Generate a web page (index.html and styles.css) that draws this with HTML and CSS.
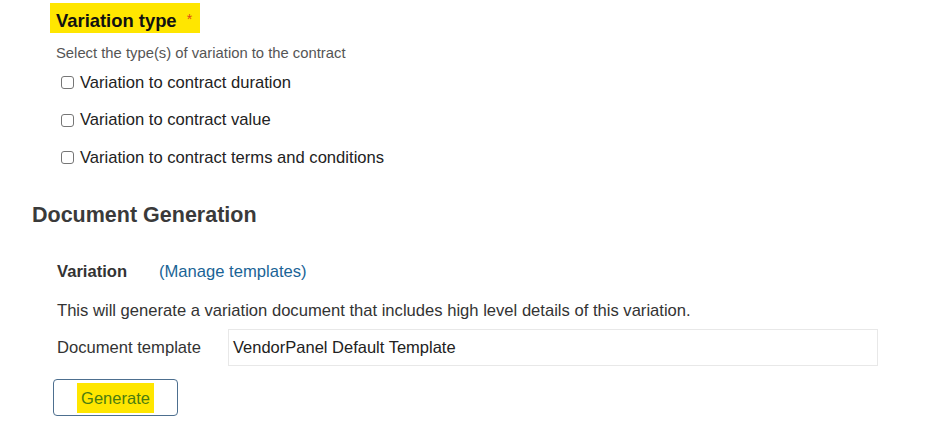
FILE: index.html
```html
<!DOCTYPE html>
<html>
<head>
<meta charset="utf-8">
<link rel="stylesheet" href="styles.css">
</head>
<body>
<div class="page">
  <section class="variation">
    <div class="vt-title"><span class="hl">Variation type <span class="req">*</span></span></div>
    <div class="hint">Select the type(s) of variation to the contract</div>
    <div class="checks">
      <label class="check"><span class="box"></span>Variation to contract duration</label>
      <label class="check"><span class="box"></span>Variation to contract value</label>
      <label class="check"><span class="box"></span>Variation to contract terms and conditions</label>
    </div>
  </section>
  <h2 class="dg-title">Document Generation</h2>
  <section class="docgen">
    <div class="vrow"><span class="vlabel">Variation</span><a class="manage">(Manage templates)</a></div>
    <p class="desc">This will generate a variation document that includes high level details of this variation.</p>
    <div class="trow"><span class="tlabel">Document template</span><div class="tinput">VendorPanel Default Template</div></div>
    <button class="gen"><span class="gen-hl">Generate</span></button>
  </section>
</div>
</body>
</html>
```
FILE: styles.css
```css
* { box-sizing: border-box; }
body { margin: 0; background: #fff; font-family: "Liberation Sans", Arial, sans-serif; color: #333; }
.page { padding: 3px 0 0 0; }
.variation { padding-left: 50px; }
.vt-title { display: flex; }
.hl { background: #ffe600; color: #111; font-weight: bold; font-size: 18.4px; height: 30px; line-height: 32px; padding: 0 6px 0 6px; width: 150px; }
.req { color: #e0461a; font-size: 14px; font-weight: normal; vertical-align: 3px; margin-left: 5px; }
.hint { font-size: 14.8px; color: #555; margin: 11px 0 0 6px; line-height: 18px; }
.checks { display: flex; flex-direction: column; gap: 18.5px; margin: 11px 0 0 11px; }
.check { display: flex; align-items: center; font-size: 16.6px; color: #222; height: 19px; }
.box { width: 13px; height: 13px; border: 1px solid #767676; border-radius: 3px; margin-right: 6px; background: #fff; }
.dg-title { font-size: 21.5px; font-weight: bold; color: #3a3a3a; margin: 35px 0 0 32px; line-height: 26px; }
.docgen { padding-left: 57px; }
.vrow { display: flex; font-size: 16.6px; margin-top: 34px; line-height: 20px; }
.vlabel { font-weight: bold; color: #333; width: 102px; }
.manage { color: #1a6496; }
.desc { margin: 19px 0 0 0; font-size: 16.6px; color: #333; line-height: 20px; }
.trow { display: flex; align-items: center; margin-top: 8px; }
.tlabel { width: 171px; font-size: 16.6px; color: #333; }
.tinput { width: 650px; height: 37px; border: 1px solid #e8e8e8; padding: 0 4px; line-height: 35px; font-size: 16.5px; color: #222; }
.gen { display: flex; align-items: center; justify-content: center; margin: 13px 0 0 -4px; width: 125px; height: 37px; border: 1px solid #4d6f8f; border-radius: 4px; background: #fff; padding: 0; font-family: inherit; }
.gen-hl { background: #ffe600; color: #4b7d10; font-size: 16.5px; height: 30px; line-height: 30px; padding: 0 4px; width: 77px; }
```
